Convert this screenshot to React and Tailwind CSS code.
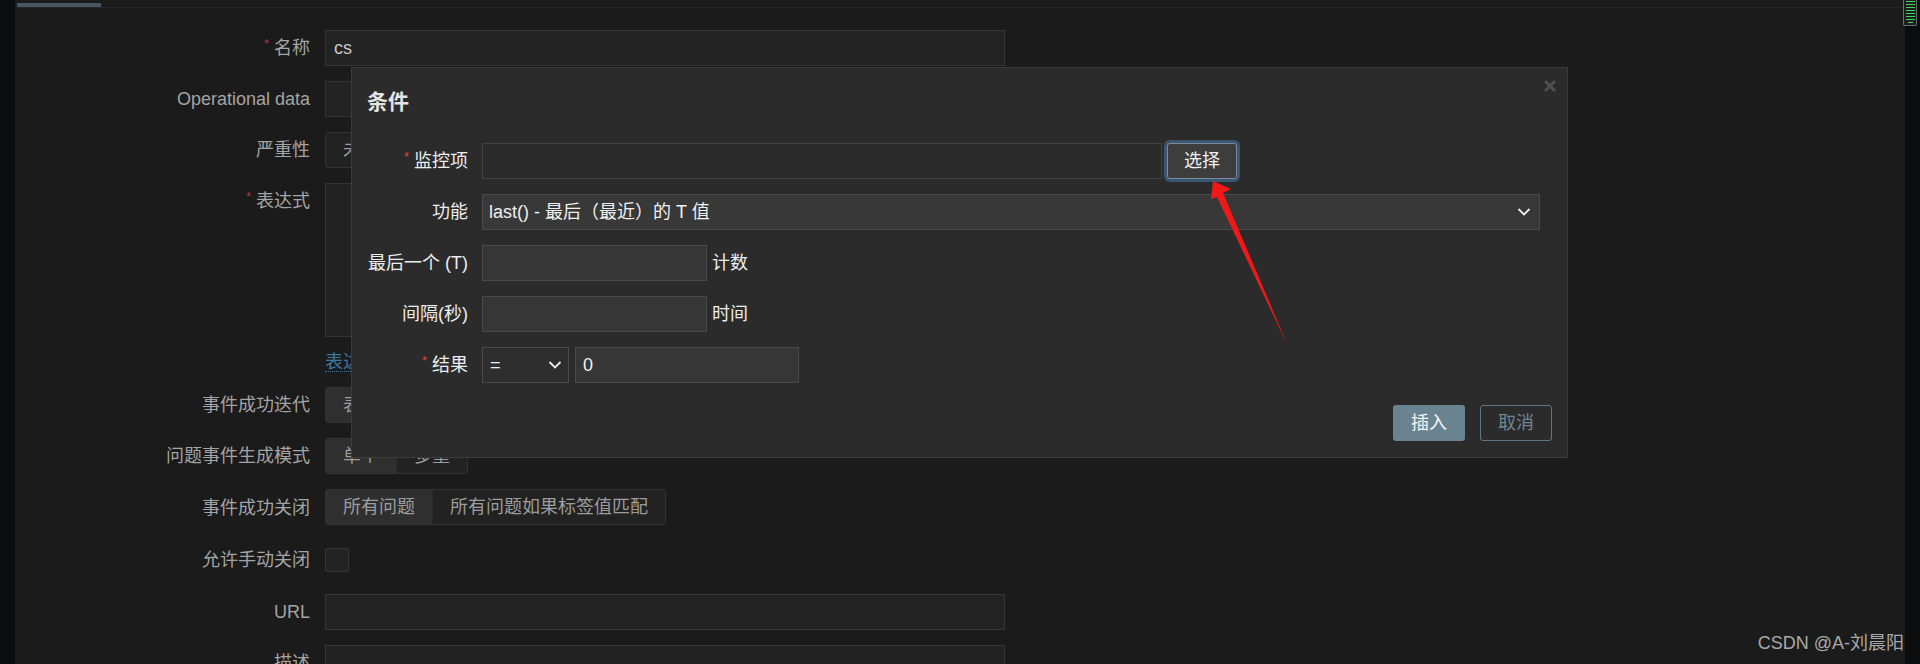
import React from 'react'

const Star = ({ dim }) => (
  <span className={`relative -top-[4px] mr-[5px] text-[13px] ${dim ? 'text-[#a53a3a]' : 'text-[#e0453f]'}`}>*</span>
)

const Row = ({ label, required, children, labelH = 'h-[36px]' }) => (
  <div className="flex items-start">
    <div className={`w-[295px] shrink-0 flex items-center justify-end text-[#a4a4a4] ${labelH}`}>
      {required && <Star dim />}
      <span>{label}</span>
    </div>
    <div className="ml-[15px]">{children}</div>
  </div>
)

const Seg = ({ items, selected = 0 }) => (
  <div className="flex h-[36px] rounded-[3px] border border-[#333] bg-[#222] overflow-hidden">
    {items.map((it, i) => (
      <div
        key={it}
        className={`flex items-center px-[17px] text-[#9c9c9c] ${i === selected ? 'bg-[#2f2f2f]' : ''} ${i > 0 ? 'border-l border-[#2a2a2a]' : ''}`}
      >
        {it}
      </div>
    ))}
  </div>
)

const Chevron = ({ className }) => (
  <svg className={className} width="14" height="10" viewBox="0 0 14 10" fill="none">
    <path d="M1.5 2 L7 7.5 L12.5 2" stroke="#ededed" strokeWidth="1.8" />
  </svg>
)

const MLabel = ({ children, required }) => (
  <div className="h-[36px] flex items-center justify-end text-[#ededed] whitespace-nowrap">
    {required && <Star />}
    <span>{children}</span>
  </div>
)

export default function App() {
  return (
    <div className="relative w-[1920px] h-[664px] overflow-hidden bg-[#1b1b1b] flex font-['Liberation_Sans','Noto_Sans_CJK_SC',sans-serif] text-[18px] leading-[22px]">
      {/* left strip */}
      <div className="w-[15px] shrink-0 bg-[#0c0d0e]" />

      {/* main page */}
      <div className="flex-1 flex flex-col">
        <div className="h-[8px] border-b border-[#262626] shrink-0">
          <div className="ml-[2px] mt-[3px] w-[84px] h-[4px] bg-[#4a5562]" />
        </div>

        <div className="pt-[22px] flex flex-col gap-[15px]">
          <Row label="名称" required>
            <div className="w-[680px] h-[36px] bg-[#232323] border border-[#353535] flex items-center px-[8px] text-[#c9c9c9]">cs</div>
          </Row>
          <Row label="Operational data">
            <div className="w-[680px] h-[36px] bg-[#232323] border border-[#353535]" />
          </Row>
          <Row label="严重性">
            <Seg items={['未分类', '信息', '警告', '一般严重', '严重', '灾难']} selected={-1} />
          </Row>
          <Row label="表达式" required>
            <div className="w-[680px] h-[154px] bg-[#222] border border-[#353535]" />
          </Row>
          <div className="flex h-[20px]">
            <div className="w-[295px] shrink-0" />
            <div className="ml-[15px] text-[#3b79a2] leading-[20px] border-b border-dotted border-[#3b79a2] h-[20px]">表达式构造器</div>
          </div>
          <Row label="事件成功迭代">
            <Seg items={['表达式', '恢复表达式', '无']} />
          </Row>
          <Row label="问题事件生成模式">
            <Seg items={['单个', '多重']} />
          </Row>
          <Row label="事件成功关闭" labelH="h-[37px]">
            <div className="h-[37px] flex">
              <Seg items={['所有问题', '所有问题如果标签值匹配']} />
            </div>
          </Row>
          <Row label="允许手动关闭" labelH="h-[38px]">
            <div className="h-[38px] flex items-center">
              <div className="w-[24px] h-[24px] bg-[#232323] border border-[#363636] rounded-[2px]" />
            </div>
          </Row>
          <Row label="URL">
            <div className="w-[680px] h-[36px] bg-[#232323] border border-[#353535]" />
          </Row>
          <Row label="描述">
            <div className="w-[680px] h-[90px] bg-[#222] border border-[#353535]" />
          </Row>
        </div>
      </div>

      {/* right strip */}
      <div className="relative w-[15px] shrink-0 bg-[#0b0c0e]">
        <div className="absolute -left-[2px] top-0 w-[14px] h-[26px] border-x border-b border-[#6c6c6c] rounded-b-[2px] bg-[#1e1e1e] flex flex-col items-center gap-[2px] pt-[1px]">
          {[0, 1, 2, 3, 4, 5, 6].map(i => (
            <div key={i} className="w-[9px] h-[1px] bg-[#3fd35f]" />
          ))}
          <div className="w-[5px] h-[1px] bg-[#3fd35f]" />
        </div>
      </div>

      {/* dialog */}
      <div className="absolute left-[351px] top-[67px] w-[1217px] h-[391px] bg-[#2b2b2b] border border-[#3b3b3b]">
        <div className="pl-[15px] pt-[22px] text-[21px] leading-[24px] font-bold text-[#e4e4e4]">条件</div>
        <svg className="absolute right-[10px] top-[11px]" width="14" height="14" viewBox="0 0 14 14">
          <path d="M2 2 L12 12 M12 2 L2 12" stroke="#4f4f4f" strokeWidth="3" />
        </svg>

        <div className="mt-[29px] pl-[15px] grid grid-cols-[101px_1fr] gap-x-[14px] gap-y-[15px]">
          <MLabel required>监控项</MLabel>
          <div className="flex items-center">
            <div className="w-[680px] h-[36px] bg-[#2b2b2b] border border-[#414141]" />
            <button className="ml-[5px] w-[70px] h-[36px] bg-[#3d3d3d] border border-[#7b8b98] rounded-[3px] shadow-[0_0_0_3px_#3a5672] text-[#f0f0f0]">选择</button>
          </div>

          <MLabel>功能</MLabel>
          <div className="w-[1058px] h-[36px] bg-[#383838] border border-[#4a4a4a] flex items-center justify-between pl-[6px] pr-[8px] text-[#f0f0f0]">
            <span>last() - 最后（最近）的 T 值</span>
            <Chevron />
          </div>

          <MLabel>最后一个 (T)</MLabel>
          <div className="flex items-center">
            <div className="w-[225px] h-[36px] bg-[#363636] border border-[#4a4a4a]" />
            <span className="ml-[5px] text-[#ededed]">计数</span>
          </div>

          <MLabel>间隔(秒)</MLabel>
          <div className="flex items-center">
            <div className="w-[225px] h-[36px] bg-[#363636] border border-[#4a4a4a]" />
            <span className="ml-[5px] text-[#ededed]">时间</span>
          </div>

          <MLabel required>结果</MLabel>
          <div className="flex items-center">
            <div className="w-[87px] h-[36px] bg-[#2e2e2e] border border-[#4a4a4a] flex items-center justify-between pl-[7px] pr-[6px] text-[#f0f0f0]">
              <span>=</span>
              <Chevron />
            </div>
            <div className="ml-[6px] w-[224px] h-[36px] bg-[#363636] border border-[#4a4a4a] flex items-center px-[7px] text-[#f0f0f0]">0</div>
          </div>
        </div>

        <div className="mt-[22px] pr-[15px] flex justify-end gap-[15px]">
          <button className="w-[72px] h-[36px] rounded-[3px] bg-[#6a8391] text-[#f4f4f4]">插入</button>
          <button className="w-[72px] h-[36px] rounded-[3px] border border-[#5f7684] text-[#6f8593]">取消</button>
        </div>
      </div>

      {/* red annotation arrow */}
      <svg className="absolute left-0 top-0 pointer-events-none" width="1920" height="664">
        <polygon points="1213,181 1231,189 1223,193 1288,346 1217,197 1211,199" fill="#f01818" />
      </svg>

      {/* watermark */}
      <div className="absolute right-[16px] top-[632px] text-[18px] leading-[22px] text-[#a9a9a9]">CSDN @A-刘晨阳</div>
    </div>
  )
}
